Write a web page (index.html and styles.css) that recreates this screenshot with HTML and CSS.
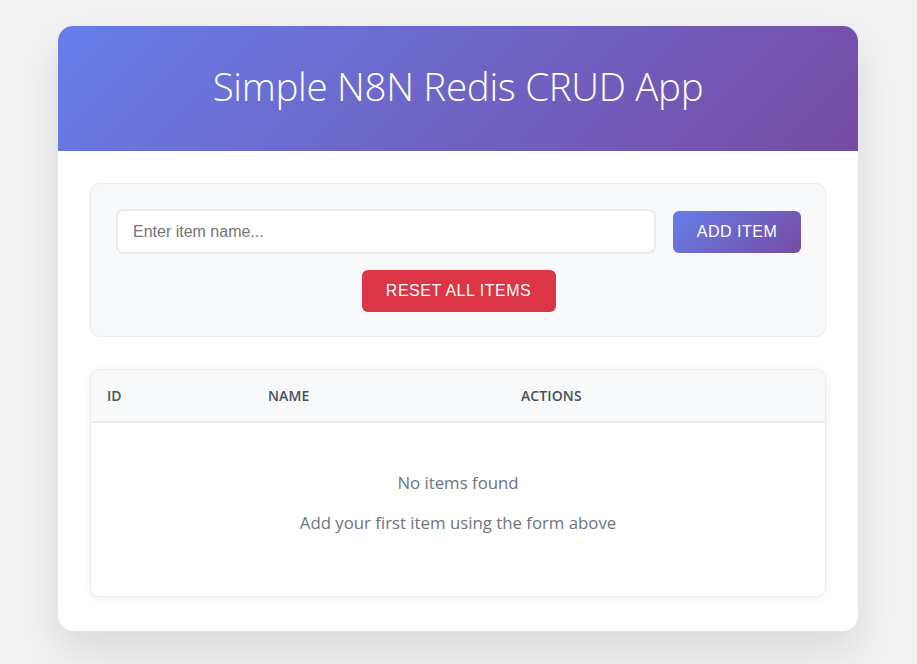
FILE: index.html
```html
<!DOCTYPE html>
<html>
<head>
<meta charset="utf-8">
<title>Simple N8N Redis CRUD App</title>
<link rel="stylesheet" href="styles.css">
</head>
<body>
<div class="app">
  <header class="app-header">
    <h1 class="title">Simple N8N Redis CRUD App</h1>
  </header>
  <main class="app-body">
    <section class="form-card">
      <div class="form-row">
        <input class="item-input" type="text" placeholder="Enter item name...">
        <button class="btn btn-add">ADD ITEM</button>
      </div>
      <div class="reset-row">
        <button class="btn btn-reset">RESET ALL ITEMS</button>
      </div>
    </section>
    <section class="table-card">
      <div class="table-head">
        <div class="th">ID</div>
        <div class="th">NAME</div>
        <div class="th">ACTIONS</div>
      </div>
      <div class="empty">
        <p class="empty-title">No items found</p>
        <p class="empty-sub">Add your first item using the form above</p>
      </div>
    </section>
  </main>
</div>
</body>
</html>
```

FILE: styles.css
```css
* { box-sizing: border-box; }
html, body { margin: 0; padding: 0; }
body {
  background: #f2f2f2;
  font-family: "Open Sans", "Noto Sans", sans-serif;
  padding: 26px 1px 40px 0;
}
.app {
  width: 800px;
  margin: 0 auto;
  background: #fff;
  border-radius: 15px;
  overflow: hidden;
  box-shadow: 0 20px 40px rgba(0,0,0,0.1);
}
.app-header {
  height: 125px;
  background: linear-gradient(135deg, #667eea 0%, #764ba2 100%);
  display: flex;
  align-items: center;
  justify-content: center;
  padding-bottom: 5px;
}
.title {
  margin: 0;
  color: #fff;
  font-weight: 300;
  font-size: 38.5px;
  letter-spacing: -0.3px;
}
.app-body {
  padding: 32px 32px 34px;
}
.form-card {
  background: #f8f9fa;
  border: 1px solid #e9ecef;
  border-radius: 10px;
  padding: 25px 24px 24px 25px;
}
.form-row {
  display: flex;
  align-items: center;
  gap: 17px;
}
.item-input {
  flex: 1;
  height: 45px;
  border: 2px solid #e9ecef;
  border-radius: 8px;
  background: #fff;
  padding: 0 15px;
  font-family: "Liberation Sans", Arial, sans-serif;
  font-size: 16px;
  color: #333;
  outline: none;
}
.item-input::placeholder { color: #757575; }
.btn {
  border: none;
  color: #fff;
  font-family: "Liberation Sans", Arial, sans-serif;
  font-size: 16px;
  letter-spacing: 0.5px;
  height: 42px;
  border-radius: 6px;
  padding: 0;
}
.btn-add {
  width: 128px;
  background: linear-gradient(135deg, #667eea 0%, #764ba2 100%);
}
.reset-row {
  display: flex;
  justify-content: center;
  margin-top: 16px;
}
.btn-reset {
  width: 194px;
  background: #dc3545;
}
.table-card {
  margin-top: 32px;
  border: 1px solid #e9ecef;
  border-radius: 10px;
  overflow: hidden;
  box-shadow: 0 2px 8px rgba(0,0,0,0.07);
}
.table-head {
  display: grid;
  grid-template-columns: 161px 253px 1fr;
  background: #f8f9fa;
  border-bottom: 2px solid #e9ecef;
  height: 53px;
  align-items: center;
}
.th {
  padding-left: 16px;
  font-size: 14px;
  font-weight: 600;
  color: #495057;
  letter-spacing: 0.1px;
}
.empty {
  text-align: center;
  padding: 48px 0 61px;
  color: #6c757d;
}
.empty p { margin: 0; font-size: 16.8px; line-height: 24px; }
.empty-title { margin-bottom: 16px !important; }
```
